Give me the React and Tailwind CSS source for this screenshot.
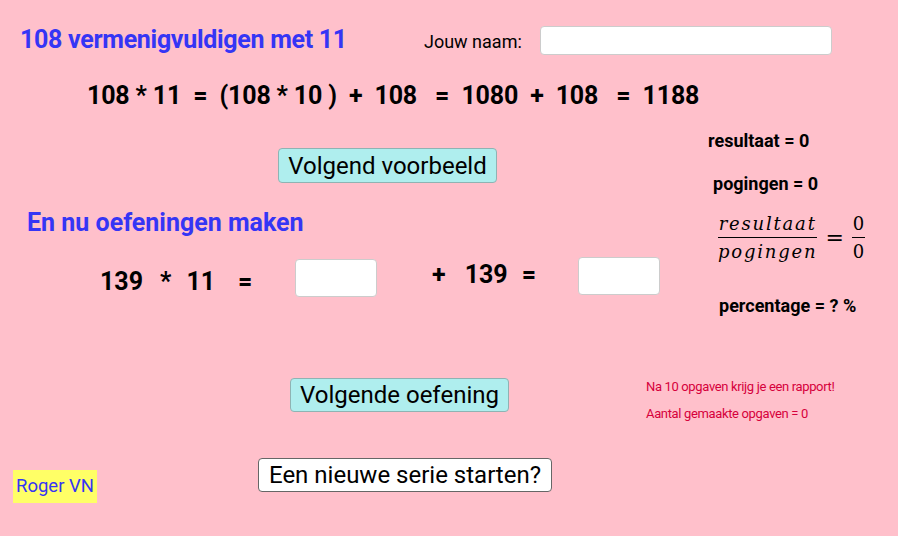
export default function App() {
  return (
    <div className="w-[898px] h-[536px] bg-[#ffc0cb] overflow-hidden font-['Roboto'] text-black">
      {/* kop: titel + naamveld */}
      <div className="flex items-start pt-[26px] pl-[20px]">
        <div className="w-[404px] mt-[1px] text-[25px] font-bold leading-none tracking-[-0.3px] text-[#3535f5] whitespace-nowrap">
          108 vermenigvuldigen met 11
        </div>
        <div className="w-[116px] mt-[7px] text-[18px] leading-none">Jouw naam:</div>
        <input className="w-[292px] h-[29px] bg-white border border-[#cccccc] rounded-[4px]" />
      </div>

      {/* voorbeeld */}
      <div className="mt-[28px] pl-[87px] text-[25px] font-bold leading-none tracking-[-0.17px] whitespace-pre">
        108 * 11  =  (108 * 10 )  +  108   =  1080  +  108   =  1188
      </div>

      <div className="flex h-[212px]">
        <div className="w-[690px]">
          <button className="ml-[278px] mt-[40px] w-[219px] h-[35px] bg-[#afeeee] border border-[#8fb3b3] rounded-[4px] text-[24px] leading-none">
            Volgend voorbeeld
          </button>
          <div className="ml-[27px] mt-[27px] text-[25px] font-bold leading-none text-[#3535f5]">
            En nu oefeningen maken
          </div>
          <div className="flex items-start mt-[22px] text-[25px] font-bold leading-none">
            <div className="ml-[100px] w-[195px] mt-[12px] flex">
              <span>139</span>
              <span className="ml-[17px]">*</span>
              <span className="ml-[15px]">11</span>
              <span className="ml-[23px]">=</span>
            </div>
            <input className="mt-[2px] w-[82px] h-[38px] bg-white border border-[#cccccc] rounded-[4px]" />
            <div className="ml-[55px] w-[146px] mt-[5px] flex">
              <span>+</span>
              <span className="ml-[19px]">139</span>
              <span className="ml-[14px]">=</span>
            </div>
            <input className="w-[82px] h-[38px] bg-white border border-[#cccccc] rounded-[4px]" />
          </div>
        </div>

        <div className="flex flex-col items-start text-[18px] font-bold leading-none">
          <div className="ml-[18px] mt-[24px]">resultaat = 0</div>
          <div className="ml-[23px] mt-[25px]">pogingen = 0</div>
          <div className="ml-[28px] mt-[21px] flex items-center font-['DejaVu_Serif'] font-normal text-[18px]">
            <div className="flex flex-col items-center italic tracking-[1.8px]">
              <span className="leading-[20px] pb-[3px]">resultaat</span>
              <span className="w-full border-t border-black leading-[20px] pt-[4px] text-center">pogingen</span>
            </div>
            <span className="mx-[8px] text-[22px]">=</span>
            <div className="flex flex-col items-center">
              <span className="leading-[20px] pb-[3px]">0</span>
              <span className="border-t border-black leading-[20px] pt-[4px] px-[1px]">0</span>
            </div>
          </div>
          <div className="ml-[29px] mt-[35px]">percentage = ? %</div>
        </div>
      </div>

      {/* volgende oefening + info */}
      <div className="flex items-start mt-[58px]">
        <button className="ml-[290px] w-[219px] h-[34px] bg-[#afeeee] border border-[#8fb3b3] rounded-[4px] text-[24px] leading-none">
          Volgende oefening
        </button>
        <div className="ml-[137px] mt-[2px] text-[13px] leading-none tracking-[-0.35px] text-[#d6003c]">
          <div>Na 10 opgaven krijg je een rapport!</div>
          <div className="mt-[14px]">Aantal gemaakte opgaven = 0</div>
        </div>
      </div>

      <div className="flex items-start mt-[38px]">
        <div className="ml-[13px] mt-[12px] w-[84px] h-[33px] bg-[#ffff66] flex items-center justify-center text-[18.5px] text-[#3535f5] leading-none">
          Roger VN
        </div>
        <button className="ml-[161px] w-[294px] h-[34px] bg-white border border-[#666666] rounded-[4px] text-[24px] leading-none">
          Een nieuwe serie starten?
        </button>
      </div>
    </div>
  );
}
